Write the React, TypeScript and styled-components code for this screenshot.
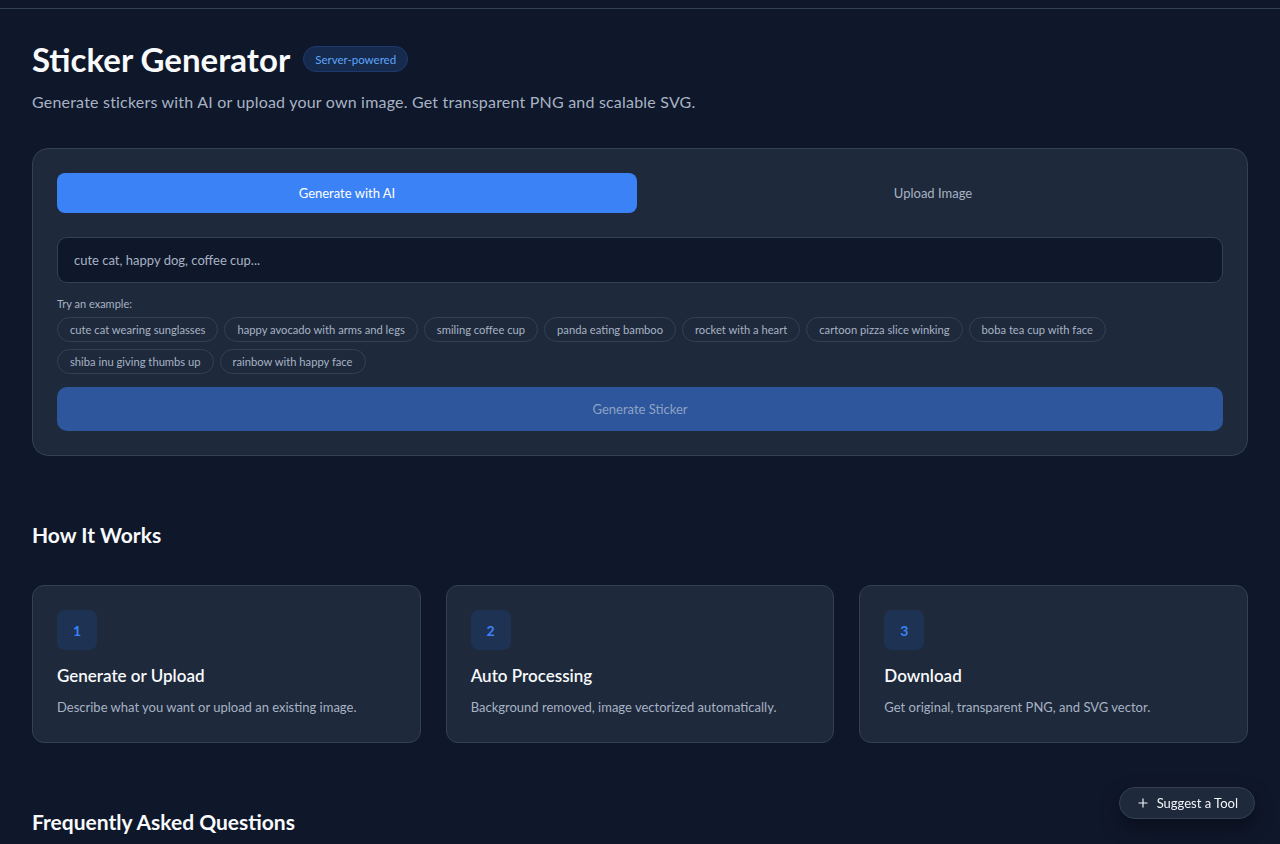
import React from 'react';
import styled, { createGlobalStyle } from 'styled-components';
import { Plus } from 'lucide-react';

const GlobalStyle = createGlobalStyle`
  html, body {
    margin: 0;
    padding: 0;
    background: #0f172a;
    color: #f1f5f9;
    font-family: Lato, "Open Sans", sans-serif;
  }
  * { box-sizing: border-box; }
`;

const TopBar = styled.div`
  height: 9px;
  border-bottom: 1px solid #334155;
`;

const Page = styled.main`
  padding: 29px 32px 0;
`;

const TitleRow = styled.div`
  display: flex;
  align-items: center;
  gap: 13px;
  height: 42px;
`;

const Title = styled.h1`
  margin: 0;
  font-size: 33px;
  font-weight: 700;
  color: #f8fafc;
`;

const Badge = styled.span`
  display: inline-flex;
  align-items: center;
  height: 26px;
  padding: 0 11px;
  border-radius: 999px;
  background: #152a4d;
  border: 1px solid #1e3a6e;
  color: #60a5fa;
  font-size: 11.5px;
`;

const Subtitle = styled.p`
  margin: 12px 0 0;
  font-size: 16px;
  letter-spacing: 0.2px;
  color: #a7b3c4;
`;

const Panel = styled.section`
  margin-top: 37px;
  background: #1e293b;
  border: 1px solid #334155;
  border-radius: 16px;
  padding: 24px;
`;

const Tabs = styled.div`
  display: grid;
  grid-template-columns: 1fr 1fr;
  gap: 6px;
`;

const Tab = styled.button<{ $active?: boolean }>`
  height: 40px;
  border: none;
  border-radius: 8px;
  background: ${p => (p.$active ? '#3b82f6' : 'transparent')};
  color: ${p => (p.$active ? '#ffffff' : '#a7b3c4')};
  font-family: inherit;
  font-size: 13px;
  cursor: pointer;
`;

const Input = styled.input`
  display: block;
  width: 100%;
  height: 46px;
  margin-top: 24px;
  padding: 0 16px;
  background: #0f172a;
  border: 1px solid #334155;
  border-radius: 10px;
  color: #f1f5f9;
  font-family: inherit;
  font-size: 13px;
  outline: none;
  &::placeholder {
    color: #a7b3c4;
  }
`;

const ExampleLabel = styled.div`
  margin-top: 14px;
  font-size: 11px;
  color: #a7b3c4;
`;

const Chips = styled.div`
  display: flex;
  flex-wrap: wrap;
  gap: 7px 6px;
  margin-top: 7px;
`;

const Chip = styled.button`
  height: 25px;
  padding: 0 12px;
  border-radius: 999px;
  border: 1px solid #334155;
  background: transparent;
  color: #a7b3c4;
  font-family: inherit;
  font-size: 11.2px;
  cursor: pointer;
`;

const GenerateButton = styled.button`
  display: block;
  width: 100%;
  height: 44px;
  margin-top: 13px;
  border: none;
  border-radius: 10px;
  background: #2d569c;
  color: #8ea3c4;
  font-family: inherit;
  font-size: 13px;
`;

const SectionTitle = styled.h2<{ $top: number }>`
  margin: ${p => p.$top}px 0 0;
  font-size: 21px;
  font-weight: 700;
  color: #f8fafc;
`;

const Steps = styled.div`
  display: grid;
  grid-template-columns: repeat(3, 1fr);
  gap: 25px;
  margin-top: 38px;
`;

const StepCard = styled.div`
  background: #1e293b;
  border: 1px solid #334155;
  border-radius: 12px;
  padding: 24px 24px 27px;
`;

const StepNumber = styled.div`
  display: flex;
  align-items: center;
  justify-content: center;
  width: 40px;
  height: 40px;
  border-radius: 8px;
  background: #1e3354;
  color: #3b82f6;
  font-size: 14px;
  font-weight: 700;
`;

const StepTitle = styled.h3`
  margin: 15px 0 0;
  font-size: 17px;
  font-weight: 600;
  color: #f8fafc;
`;

const StepText = styled.p`
  margin: 13px 0 0;
  font-size: 13px;
  color: #a7b3c4;
`;

const SuggestButton = styled.button`
  position: fixed;
  right: 25px;
  bottom: 25px;
  display: flex;
  align-items: center;
  gap: 7px;
  height: 32px;
  padding: 0 16px;
  border-radius: 999px;
  background: #1e293b;
  border: 1px solid #334155;
  color: #f1f5f9;
  font-family: inherit;
  font-size: 13px;
  box-shadow: 0 8px 20px rgba(0, 0, 0, 0.4);
  cursor: pointer;
`;

const examples = [
  'cute cat wearing sunglasses',
  'happy avocado with arms and legs',
  'smiling coffee cup',
  'panda eating bamboo',
  'rocket with a heart',
  'cartoon pizza slice winking',
  'boba tea cup with face',
  'shiba inu giving thumbs up',
  'rainbow with happy face',
];

const steps = [
  { n: 1, title: 'Generate or Upload', text: 'Describe what you want or upload an existing image.' },
  { n: 2, title: 'Auto Processing', text: 'Background removed, image vectorized automatically.' },
  { n: 3, title: 'Download', text: 'Get original, transparent PNG, and SVG vector.' },
];

const App = () => {
  return (
    <>
      <GlobalStyle />
      <TopBar />
      <Page>
        <TitleRow>
          <Title>Sticker Generator</Title>
          <Badge>Server-powered</Badge>
        </TitleRow>
        <Subtitle>Generate stickers with AI or upload your own image. Get transparent PNG and scalable SVG.</Subtitle>

        <Panel>
          <Tabs>
            <Tab $active>Generate with AI</Tab>
            <Tab>Upload Image</Tab>
          </Tabs>
          <Input placeholder="cute cat, happy dog, coffee cup..." />
          <ExampleLabel>Try an example:</ExampleLabel>
          <Chips>
            {examples.map(e => (
              <Chip key={e}>{e}</Chip>
            ))}
          </Chips>
          <GenerateButton disabled>Generate Sticker</GenerateButton>
        </Panel>

        <SectionTitle $top={66}>How It Works</SectionTitle>
        <Steps>
          {steps.map(s => (
            <StepCard key={s.n}>
              <StepNumber>{s.n}</StepNumber>
              <StepTitle>{s.title}</StepTitle>
              <StepText>{s.text}</StepText>
            </StepCard>
          ))}
        </Steps>

        <SectionTitle $top={66}>Frequently Asked Questions</SectionTitle>
      </Page>
      <SuggestButton>
        <Plus size={14} strokeWidth={2} />
        Suggest a Tool
      </SuggestButton>
    </>
  );
};

export default App;
